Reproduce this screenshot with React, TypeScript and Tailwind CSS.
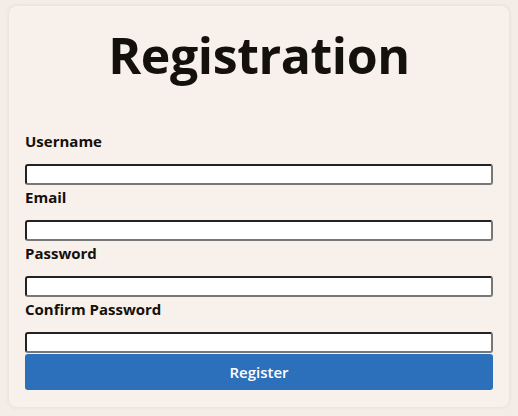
import React from 'react';

const fields = ['Username', 'Email', 'Password', 'Confirm Password'];

export default function App() {
  return (
    <div className="min-h-[416px] w-[518px] bg-[#f3ece7] pt-[6px] pl-[9px]" style={{ fontFamily: '"Open Sans", sans-serif' }}>
      <div className="w-[500px] h-[401px] rounded-lg bg-[#f7f0eb] shadow-[0_0_4px_rgba(120,90,70,0.12)] px-4 pt-[18px]">
        <h1 className="text-center text-[50px] font-bold leading-[62px] text-[#14110c] tracking-[-0.4px]">
          Registration
        </h1>
        <form className="mt-[43px] flex flex-col">
          {fields.map((label) => (
            <div key={label} className="flex flex-col">
              <label className="pt-[2px] text-[15px] font-bold leading-5 text-[#14110c]">{label}</label>
              <input
                type={label.includes('Password') ? 'password' : 'text'}
                className="mt-[13px] h-[21px] w-full rounded-[3px] border-2 border-t-[#222] border-l-[#222] border-b-[#777] border-r-[#777] bg-white"
              />
            </div>
          ))}
          <button
            type="button"
            className="mt-[1px] h-[36px] w-full rounded-[3px] bg-[#2c6fbb] text-[15px] font-semibold text-white"
          >
            Register
          </button>
        </form>
      </div>
    </div>
  );
}
